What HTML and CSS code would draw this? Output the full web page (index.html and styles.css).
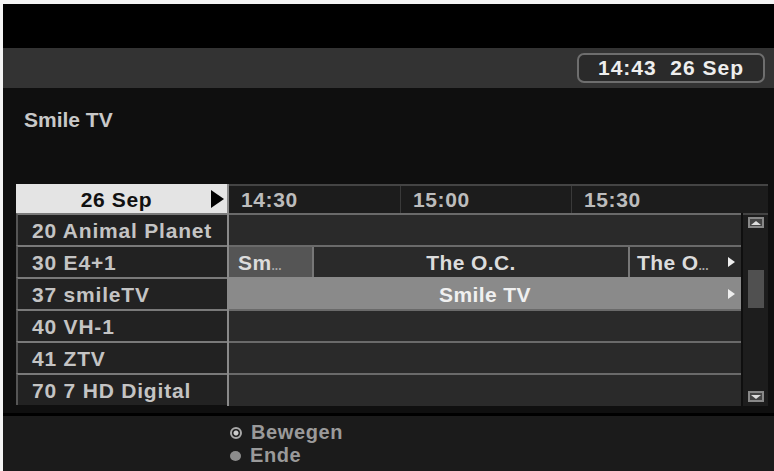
FILE: index.html
```html
<!DOCTYPE html>
<html lang="de">
<head>
  <meta charset="UTF-8">
  <title>Programmführer</title>
  <link rel="stylesheet" href="styles.css">
</head>
<body>
  <div class="screen">
    <div class="top-black"></div>

    <div class="titlebar">
      <div class="clock">14:43&nbsp;&nbsp;26 Sep</div>
    </div>

    <div class="info">Smile TV</div>

    <div class="guide">
      <div class="channels">
        <div class="day">26 Sep <span class="day-arrow"></span></div>
        <div class="ch">20 Animal Planet</div>
        <div class="ch">30 E4+1</div>
        <div class="ch">37 smileTV</div>
        <div class="ch">40 VH-1</div>
        <div class="ch">41 ZTV</div>
        <div class="ch">70 7 HD Digital</div>
      </div>

      <div class="main">
        <div class="times">
          <div class="slot">14:30</div>
          <div class="slot">15:00</div>
          <div class="slot">15:30</div>
        </div>
        <div class="body">
          <div class="progs">
            <div class="row"></div>
            <div class="row">
              <div class="cell cell-past" style="width: 83px">Sm<span class="dots">...</span></div>
              <div class="cell center" style="width: 316px">The O.C.</div>
              <div class="cell more">The O<span class="dots">...</span><span class="tri"></span></div>
            </div>
            <div class="row row-sel">
              <div class="cell center wide">Smile TV</div>
              <span class="tri tri-sel"></span>
            </div>
            <div class="row"></div>
            <div class="row"></div>
            <div class="row"></div>
          </div>
          <div class="scroll">
            <div class="arrow-btn"><span class="up"></span></div>
            <div class="thumb"></div>
            <div class="arrow-btn"><span class="down"></span></div>
          </div>
        </div>
      </div>
    </div>

    <div class="footer">
      <div class="hint"><span class="ring"></span>Bewegen</div>
      <div class="hint"><span class="dot"></span>Ende</div>
    </div>
  </div>
</body>
</html>
```

FILE: styles.css
```css
* {
  margin: 0;
  padding: 0;
  box-sizing: border-box;
}

body {
  background: #f4f4f4;
  font-family: 'Liberation Sans', Arial, sans-serif;
  font-weight: bold;
  overflow: hidden;
}

.screen {
  margin: 4px 0 0 3px;
  width: 771px;
  height: 467px;
  background: #0f0f0f;
  display: flex;
  flex-direction: column;
}

.top-black {
  height: 44px;
  background: #000;
}

.titlebar {
  height: 40px;
  background: #333;
  display: flex;
  justify-content: flex-end;
  align-items: center;
  padding-right: 9px;
}

.clock {
  width: 188px;
  height: 30px;
  border: 2px solid #6e6e6e;
  border-radius: 7px;
  background: #2a2a2a;
  color: #eee;
  font-size: 21px;
  line-height: 26px;
  text-align: center;
  letter-spacing: 1px;
}

.info {
  height: 96px;
  padding: 20px 0 0 21px;
  color: #c8c8c8;
  font-size: 21px;
}

/* programme grid */
.guide {
  display: flex;
  margin-left: 13px;
  width: 752px;
}

.channels {
  width: 215px;
  border-right: 2px solid #8a8a8a;
}

.day {
  height: 29px;
  background: #e4e4e4;
  color: #111;
  font-size: 21px;
  line-height: 31px;
  letter-spacing: 0.6px;
  text-align: center;
  position: relative;
  padding-right: 10px;
}

.day-arrow {
  position: absolute;
  right: 3px;
  top: 6px;
  border-left: 13px solid #000;
  border-top: 9px solid transparent;
  border-bottom: 9px solid transparent;
}

.ch {
  height: 32px;
  border-top: 2px solid #7a7a7a;
  border-left: 2px solid #555;
  background: #222;
  color: #c4c4c4;
  font-size: 21px;
  line-height: 31px;
  padding-left: 14px;
  letter-spacing: 0.8px;
}

.main {
  flex: 1;
  display: flex;
  flex-direction: column;
}

.times {
  height: 29px;
  background: #1c1c1c;
  border-top: 2px solid #444;
  display: flex;
}

.slot {
  width: 171px;
  border-left: 1px solid #3a3a3a;
  color: #bcbcbc;
  font-size: 21px;
  line-height: 27px;
  letter-spacing: 0.6px;
  padding-left: 12px;
}

.slot:first-child {
  border-left: none;
}

.body {
  display: flex;
}

.progs {
  width: 512px;
}

.row {
  height: 32px;
  border-top: 2px solid #6a6a6a;
  background: #2a2a2a;
  display: flex;
  position: relative;
}

.row:last-child {
  height: 33px;
}

.cell {
  height: 30px;
  color: #dcdcdc;
  font-size: 21px;
  line-height: 31px;
  letter-spacing: 0.4px;
  padding-left: 9px;
  white-space: nowrap;
  overflow: hidden;
}

.cell + .cell {
  border-left: 2px solid #777;
}

.cell-past {
  background: #555;
}

.center {
  text-align: center;
  padding-left: 0;
}

.more {
  flex: 1;
  position: relative;
  padding-left: 7px;
}

.dots {
  font-size: 12px;
  color: #aaa;
  letter-spacing: 0;
}

.tri {
  position: absolute;
  right: 6px;
  top: 10px;
  border-left: 7px solid #eee;
  border-top: 5px solid transparent;
  border-bottom: 5px solid transparent;
}

.row-sel {
  background: #8a8a8a;
  border-top-color: #8a8a8a;
}

.row-sel .cell {
  color: #f0f0f0;
}

.wide {
  flex: 1;
}

.scroll {
  width: 25px;
  margin-left: 2px;
  background: #1d1d1d;
  border-top: 2px solid #444;
  display: flex;
  flex-direction: column;
  align-items: center;
  padding: 2px 0 4px;
}

.arrow-btn {
  width: 16px;
  height: 11px;
  border: 2px solid #888;
  background: #444;
  display: flex;
  justify-content: center;
  align-items: center;
}

.up {
  border-bottom: 4px solid #ddd;
  border-left: 5px solid transparent;
  border-right: 5px solid transparent;
}

.down {
  border-top: 4px solid #ddd;
  border-left: 5px solid transparent;
  border-right: 5px solid transparent;
}

.thumb {
  width: 16px;
  height: 38px;
  margin: 42px 0 auto;
  background: #505050;
}

.footer {
  margin-top: 7px;
  flex: 1;
  background: #1b1b1b;
  border-top: 3px solid #000;
  padding: 5px 0 0 227px;
  color: #9a9a9a;
  font-size: 20px;
  line-height: 23px;
  letter-spacing: 0.6px;
}

.hint {
  display: flex;
  align-items: center;
}

.ring,
.dot {
  width: 12px;
  height: 12px;
  border-radius: 50%;
  margin-right: 9px;
}

.ring {
  border: 2px solid #a8a8a8;
  background: radial-gradient(circle, #ccc 0 2px, #1b1b1b 3px);
}

.dot {
  background: #8c8c8c;
  width: 11px;
  height: 10px;
}
```
